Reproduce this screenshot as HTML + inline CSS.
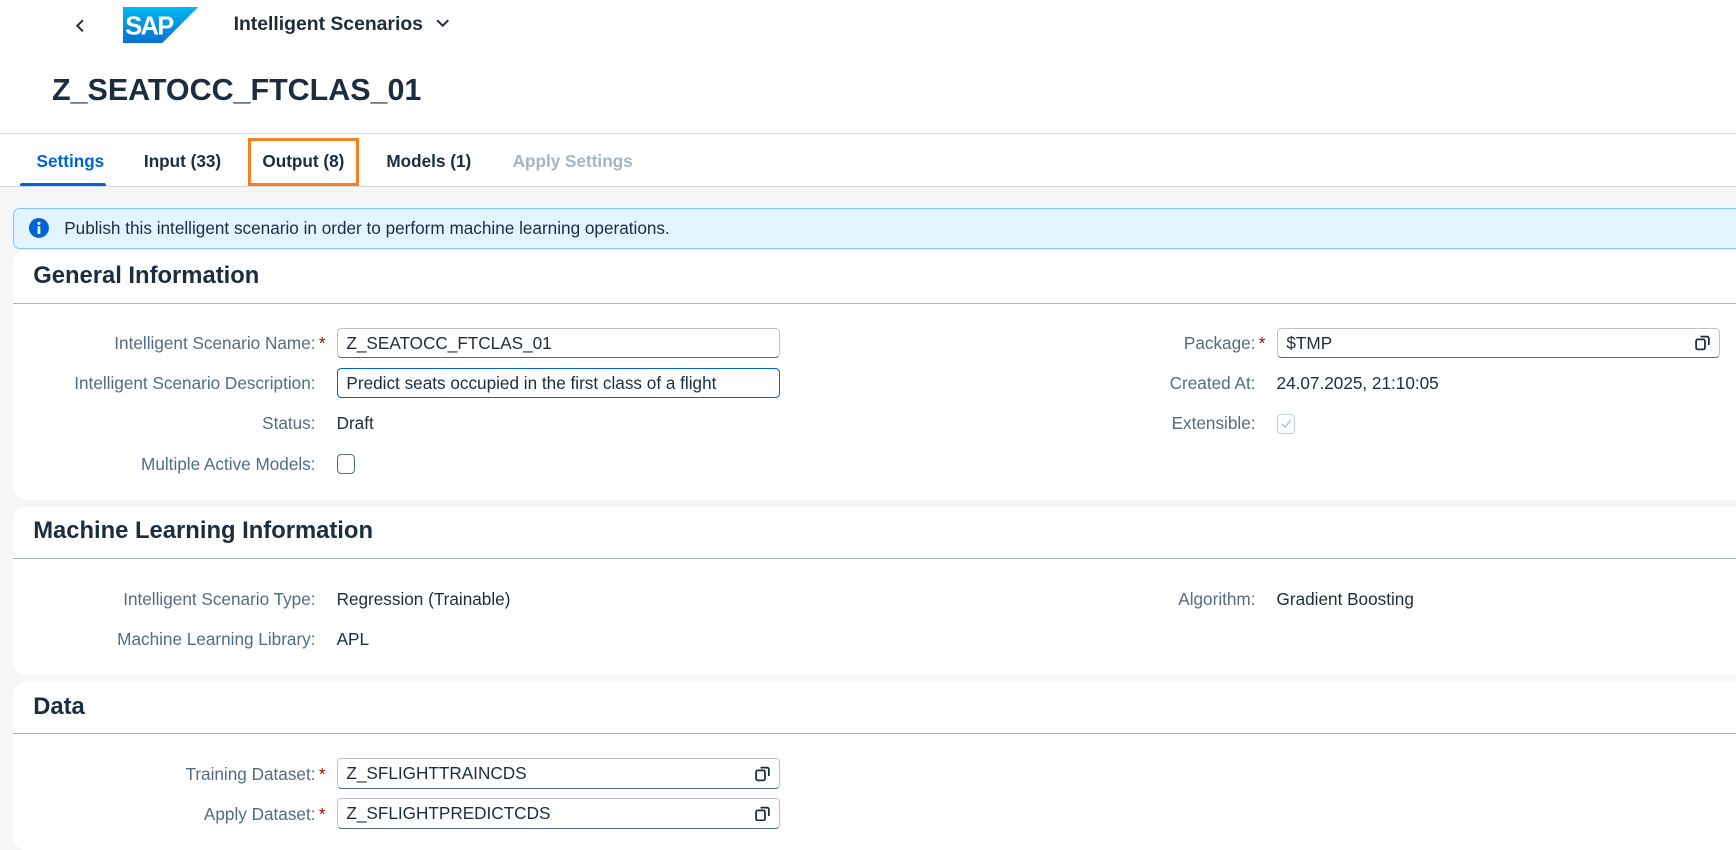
<!DOCTYPE html>
<html><head><meta charset="utf-8"><style>
html,body{margin:0;padding:0;}
body{width:1568px;height:768px;zoom:1.10714;background:#f5f6f7;font-family:"Liberation Sans",sans-serif;color:#1d2d3e;position:relative;overflow:hidden;}
.a{position:absolute;white-space:nowrap;}
.hdr{position:absolute;left:0;top:0;width:1568px;height:120px;background:#fff;border-bottom:1px solid #d9d9d9;}
.tabs{position:absolute;left:0;top:121px;width:1568px;height:47px;background:#fff;border-bottom:1px solid #d9d9d9;}
.tab{position:absolute;top:136px;font-size:15.5px;font-weight:bold;color:#1d2d3e;}
.card{position:absolute;left:12px;width:1556px;background:#fff;border-radius:12px 0 0 12px;}
.h2{position:absolute;left:18px;font-size:21.5px;font-weight:bold;}
.line{position:absolute;left:0;right:0;height:1px;background:#a8b2bd;}
.lbl{position:absolute;font-size:15.5px;color:#556b82;text-align:right;}
.val{position:absolute;font-size:15.5px;color:#1d2d3e;}
.req{color:#aa0808;margin-left:3px;}
.inp{position:absolute;height:26px;border:1px solid #bcc3ca;border-bottom-color:#556b82;border-radius:4px;background:#fff;font-size:15.5px;line-height:26px;padding-left:8px;box-sizing:content-box;}
.cp{position:absolute;right:8px;top:6px;width:14px;height:14px;}
</style></head><body>
<div class="hdr"></div>
<svg class="a" style="left:67px;top:16px" width="12" height="14" viewBox="0 0 12 14"><path d="M8 2 L3 7 L8 12" fill="none" stroke="#1d2d3e" stroke-width="1.8"/></svg>
<svg class="a" style="left:111px;top:6px" width="68" height="33" viewBox="0 0 68 33"><defs><linearGradient id="g" x1="0" y1="0" x2="0" y2="1"><stop offset="0" stop-color="#00b8f1"/><stop offset="1" stop-color="#0a6ed1"/></linearGradient></defs><path d="M0 0 H68 L35 33 H0 Z" fill="url(#g)"/><text x="2" y="25" font-family="Liberation Sans" font-weight="bold" font-size="23" fill="#fff" letter-spacing="-1.5">SAP</text></svg>
<div class="a" style="left:211px;top:12px;font-size:17.5px;font-weight:bold">Intelligent Scenarios</div>
<svg class="a" style="left:393px;top:16px" width="14" height="10" viewBox="0 0 14 10"><path d="M2 2 L7 7 L12 2" fill="none" stroke="#1d2d3e" stroke-width="1.8"/></svg>
<div class="a" style="left:47px;top:66px;font-size:27.5px;font-weight:bold">Z_SEATOCC_FTCLAS_01</div>
<div class="tabs"></div>
<div class="tab" style="left:33px;color:#0064d9">Settings</div>
<div class="a" style="left:18px;top:165px;width:78px;height:3px;background:#0064d9;border-radius:2px 2px 0 0"></div>
<div class="tab" style="left:130px">Input (33)</div>
<div class="a" style="left:224px;top:125px;width:95px;height:38px;border:3px solid #f58025"></div>
<div class="tab" style="left:237px">Output (8)</div>
<div class="tab" style="left:349px">Models (1)</div>
<div class="tab" style="left:463px;color:#a9b4be">Apply Settings</div>

<div class="a" style="left:12px;top:188px;width:1560px;height:35px;background:#e1f4ff;border:1px solid #84c6f3;border-radius:6px"></div>
<svg class="a" style="left:26px;top:197px" width="18" height="18" viewBox="0 0 18 18"><circle cx="9" cy="9" r="9" fill="#0064d9"/><rect x="7.8" y="7.5" width="2.4" height="7" fill="#fff"/><circle cx="9" cy="4.8" r="1.4" fill="#fff"/></svg>
<div class="val" style="left:58px;top:197px">Publish this intelligent scenario in order to perform machine learning operations.</div>

<div class="card" style="top:226px;height:226px">
<div class="h2" style="top:11px">General Information</div>
<div class="line" style="top:48px"></div>
</div>
<div class="lbl" style="right:1274px;top:301px">Intelligent Scenario Name:<span class="req">*</span></div>
<div class="inp" style="left:304px;top:296px;width:391px">Z_SEATOCC_FTCLAS_01</div>
<div class="lbl" style="right:1283px;top:337px">Intelligent Scenario Description:</div>
<div class="inp" style="left:304px;top:332px;width:391px;border-color:#0064d9;border-bottom-color:#0064d9">Predict seats occupied in the first class of a flight</div>
<div class="lbl" style="right:1283px;top:373px">Status:</div>
<div class="val" style="left:304px;top:373px">Draft</div>
<div class="lbl" style="right:1283px;top:410px">Multiple Active Models:</div>
<div class="a" style="left:304px;top:410px;width:15px;height:16px;border:1px solid #556b82;border-radius:4px;background:#fff"></div>

<div class="lbl" style="right:425px;top:301px">Package:<span class="req">*</span></div>
<div class="inp" style="left:1153px;top:296px;width:391px">$TMP<svg class="cp" viewBox="0 0 14 14"><rect x="1" y="4" width="8" height="9" rx="1.5" fill="none" stroke="#1d2d3e" stroke-width="1.6"/><path d="M5 1.5 H11 a1.5 1.5 0 0 1 1.5 1.5 V9" fill="none" stroke="#1d2d3e" stroke-width="1.6"/></svg></div>
<div class="lbl" style="right:434px;top:337px">Created At:</div>
<div class="val" style="left:1153px;top:337px">24.07.2025, 21:10:05</div>
<div class="lbl" style="right:434px;top:373px">Extensible:</div>
<div class="a" style="left:1153px;top:374px;width:15px;height:16px;border:1px solid #c4ccd4;border-radius:4px;background:#fff"><svg width="15" height="16" viewBox="0 0 15 16" style="position:absolute;left:0;top:0"><path d="M3.5 8 L6.5 11 L11.5 4.5" fill="none" stroke="#9dc0e6" stroke-width="1.2"/></svg></div>

<div class="card" style="top:458px;height:152px">
<div class="h2" style="top:9px">Machine Learning Information</div>
<div class="line" style="top:46px"></div>
</div>
<div class="lbl" style="right:1283px;top:532px">Intelligent Scenario Type:</div>
<div class="val" style="left:304px;top:532px">Regression (Trainable)</div>
<div class="lbl" style="right:1283px;top:568px">Machine Learning Library:</div>
<div class="val" style="left:304px;top:568px">APL</div>
<div class="lbl" style="right:434px;top:532px">Algorithm:</div>
<div class="val" style="left:1153px;top:532px">Gradient Boosting</div>

<div class="card" style="top:616px;height:152px">
<div class="h2" style="top:10px">Data</div>
<div class="line" style="top:46px"></div>
</div>
<div class="lbl" style="right:1274px;top:690px">Training Dataset:<span class="req">*</span></div>
<div class="inp" style="left:304px;top:685px;width:391px">Z_SFLIGHTTRAINCDS<svg class="cp" viewBox="0 0 14 14"><rect x="1" y="4" width="8" height="9" rx="1.5" fill="none" stroke="#1d2d3e" stroke-width="1.6"/><path d="M5 1.5 H11 a1.5 1.5 0 0 1 1.5 1.5 V9" fill="none" stroke="#1d2d3e" stroke-width="1.6"/></svg></div>
<div class="lbl" style="right:1274px;top:726px">Apply Dataset:<span class="req">*</span></div>
<div class="inp" style="left:304px;top:721px;width:391px">Z_SFLIGHTPREDICTCDS<svg class="cp" viewBox="0 0 14 14"><rect x="1" y="4" width="8" height="9" rx="1.5" fill="none" stroke="#1d2d3e" stroke-width="1.6"/><path d="M5 1.5 H11 a1.5 1.5 0 0 1 1.5 1.5 V9" fill="none" stroke="#1d2d3e" stroke-width="1.6"/></svg></div>
</body></html>
